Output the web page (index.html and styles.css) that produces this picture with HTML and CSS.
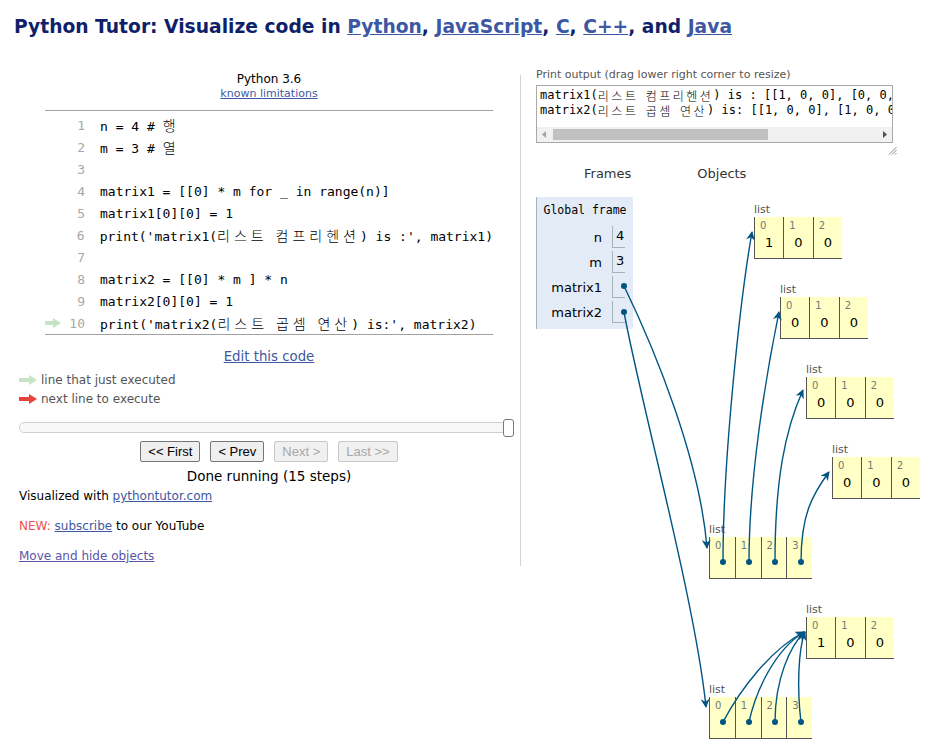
FILE: index.html
```html
<!DOCTYPE html>
<html>
<head>
<meta charset="utf-8">
<link rel="stylesheet" href="styles.css">
</head>
<body>
<h1 class="title">Python Tutor: Visualize code in <a href="#">Python</a>, <a href="#">JavaScript</a>, <a href="#">C</a>, <a href="#">C++</a>, and <a href="#">Java</a></h1>
<div class="main">
  <div class="left">
    <div class="center-block">
      <div class="lang">Python 3.6</div>
      <div class="limits"><a href="#">known limitations</a></div>
      <div class="code">
        <div class="line"><span class="arrow-cell"></span><span class="num">1</span><span class="src">n = 4 # <span class="ko">행</span></span></div>
        <div class="line"><span class="arrow-cell"></span><span class="num">2</span><span class="src">m = 3 # <span class="ko">열</span></span></div>
        <div class="line"><span class="arrow-cell"></span><span class="num">3</span><span class="src"></span></div>
        <div class="line"><span class="arrow-cell"></span><span class="num">4</span><span class="src">matrix1 = [[0] * m for _ in range(n)]</span></div>
        <div class="line"><span class="arrow-cell"></span><span class="num">5</span><span class="src">matrix1[0][0] = 1</span></div>
        <div class="line"><span class="arrow-cell"></span><span class="num">6</span><span class="src">print('matrix1(<span class="ko">리스트</span> <span class="ko">컴프리헨션</span>) is :', matrix1)</span></div>
        <div class="line"><span class="arrow-cell"></span><span class="num">7</span><span class="src"></span></div>
        <div class="line"><span class="arrow-cell"></span><span class="num">8</span><span class="src">matrix2 = [[0] * m ] * n</span></div>
        <div class="line"><span class="arrow-cell"></span><span class="num">9</span><span class="src">matrix2[0][0] = 1</span></div>
        <div class="line"><span class="arrow-cell"><svg class="code-arrow" width="16" height="10" viewBox="0 0 16 10"><rect x="0" y="3" width="9" height="4" fill="#c5e3c5"/><polygon points="8,0 16,5 8,10" fill="#c5e3c5"/></svg></span><span class="num">10</span><span class="src">print('matrix2(<span class="ko">리스트</span> <span class="ko">곱셈</span> <span class="ko">연산</span>) is:', matrix2)</span></div>
      </div>
      <div class="edit"><a href="#">Edit this code</a></div>
    </div>
    <div class="legend">
      <div class="legend-row"><svg width="18" height="10" viewBox="0 0 18 10"><rect x="0" y="3" width="11" height="4" fill="#c5e3c5"/><polygon points="10,0 18,5 10,10" fill="#c5e3c5"/></svg><span>line that just executed</span></div>
      <div class="legend-row"><svg width="18" height="10" viewBox="0 0 18 10"><rect x="0" y="3" width="11" height="4" fill="#e8433a"/><polygon points="10,0 18,5 10,10" fill="#e8433a"/></svg><span>next line to execute</span></div>
    </div>
    <div class="slider"><div class="track"></div><div class="thumb"></div></div>
    <div class="center-block">
      <div class="buttons">
        <button class="btn">&lt;&lt; First</button>
        <button class="btn">&lt; Prev</button>
        <button class="btn disabled">Next &gt;</button>
        <button class="btn disabled">Last &gt;&gt;</button>
      </div>
      <div class="done">Done running (15 steps)</div>
    </div>
    <div class="info">Visualized with <a href="#">pythontutor.com</a></div>
    <div class="info news"><span class="new">NEW:</span> <a href="#">subscribe</a> to our YouTube</div>
    <div class="info move"><a href="#" class="visited">Move and hide objects</a></div>
  </div>
  <div class="sep"></div>
  <div class="right">
    <div class="out-label">Print output (drag lower right corner to resize)</div>
    <div class="output">
      <div class="out-text"><div class="out-line">matrix1(<span class="ko-out">리스트</span> <span class="ko-out">컴프리헨션</span>) is : [[1, 0, 0], [0, 0, 0], [0, 0, 0], [0, 0, 0]]</div><div class="out-line">matrix2(<span class="ko-out">리스트</span> <span class="ko-out">곱셈</span> <span class="ko-out">연산</span>) is: [[1, 0, 0], [1, 0, 0], [1, 0, 0], [1, 0, 0]]</div></div>
      <div class="hscroll">
        <span class="sb-arrow"><svg width="15" height="15" viewBox="0 0 15 15"><polygon points="9,4 5,7.5 9,11" fill="#a3a3a3"/></svg></span>
        <span class="sb-track"><span class="sb-thumb"></span></span>
        <span class="sb-arrow"><svg width="15" height="15" viewBox="0 0 15 15"><polygon points="6,4 10,7.5 6,11" fill="#505050"/></svg></span>
      </div>
    </div>
    <div class="grip-row"><svg width="9" height="9" viewBox="0 0 9 9"><line x1="8.5" y1="1" x2="1" y2="8.5" stroke="#888" stroke-width="1"/><line x1="8.5" y1="4" x2="4" y2="8.5" stroke="#888" stroke-width="1"/><line x1="8.5" y1="7" x2="7" y2="8.5" stroke="#888" stroke-width="1"/></svg></div>
    <div class="viz-head"><span class="h-frames">Frames</span><span class="h-objects">Objects</span></div>
    <div class="frame">
      <div class="frame-title">Global frame</div>
      <div class="var"><span class="vname">n</span><span class="vval">4</span></div>
      <div class="var"><span class="vname">m</span><span class="vval">3</span></div>
      <div class="var"><span class="vname">matrix1</span><span class="vval"></span></div>
      <div class="var"><span class="vname">matrix2</span><span class="vval"></span></div>
    </div>

    <div class="obj obj-a"><div class="tlabel">list</div><div class="list l3"><div class="cell"><span class="idx">0</span><span class="val">1</span></div><div class="cell"><span class="idx">1</span><span class="val">0</span></div><div class="cell"><span class="idx">2</span><span class="val">0</span></div></div></div>
    <div class="obj obj-b"><div class="tlabel">list</div><div class="list l3"><div class="cell"><span class="idx">0</span><span class="val">0</span></div><div class="cell"><span class="idx">1</span><span class="val">0</span></div><div class="cell"><span class="idx">2</span><span class="val">0</span></div></div></div>
    <div class="obj obj-c"><div class="tlabel">list</div><div class="list l3"><div class="cell"><span class="idx">0</span><span class="val">0</span></div><div class="cell"><span class="idx">1</span><span class="val">0</span></div><div class="cell"><span class="idx">2</span><span class="val">0</span></div></div></div>
    <div class="obj obj-d"><div class="tlabel">list</div><div class="list l3"><div class="cell"><span class="idx">0</span><span class="val">0</span></div><div class="cell"><span class="idx">1</span><span class="val">0</span></div><div class="cell"><span class="idx">2</span><span class="val">0</span></div></div></div>
    <div class="obj obj-m1"><div class="tlabel">list</div><div class="list l4"><div class="cell"><span class="idx">0</span></div><div class="cell"><span class="idx">1</span></div><div class="cell"><span class="idx">2</span></div><div class="cell"><span class="idx">3</span></div></div></div>
    <div class="obj obj-m2i"><div class="tlabel">list</div><div class="list l3"><div class="cell"><span class="idx">0</span><span class="val">1</span></div><div class="cell"><span class="idx">1</span><span class="val">0</span></div><div class="cell"><span class="idx">2</span><span class="val">0</span></div></div></div>
    <div class="obj obj-m2"><div class="tlabel">list</div><div class="list l4"><div class="cell"><span class="idx">0</span></div><div class="cell"><span class="idx">1</span></div><div class="cell"><span class="idx">2</span></div><div class="cell"><span class="idx">3</span></div></div></div>

    <svg class="arrows" width="420" height="685" viewBox="521 65 420 685">
      <defs>
        <marker id="ah" viewBox="0 0 10 10" refX="9" refY="5" markerWidth="10" markerHeight="9" markerUnits="userSpaceOnUse" orient="auto">
          <path d="M0,0 L10,5 L0,10 L3,5 z" fill="#005583"/>
        </marker>
      </defs>
      <g fill="none" stroke="#005583" stroke-width="1.4" marker-end="url(#ah)">
        <path d="M624,286 C655,350 700,460 707,548"/>
        <path d="M624,312 C640,400 695,600 706,707"/>
        <path d="M723,562 C723,460 740,300 752,232"/>
        <path d="M749,562 C749,480 765,380 779,312"/>
        <path d="M775,562 C775,480 785,430 803,390"/>
        <path d="M801,562 C801,515 812,495 829,472"/>
        <path d="M723,722 C740,690 770,650 804,632"/>
        <path d="M749,722 C756,690 775,650 804,632"/>
        <path d="M775,722 C775,680 790,645 805,632"/>
        <path d="M801,722 C797,690 798,650 805,632"/>
      </g>
      <g fill="#005583">
        <circle cx="624" cy="286" r="3"/>
        <circle cx="624" cy="312" r="3"/>
        <circle cx="723" cy="562" r="3"/>
        <circle cx="749" cy="562" r="3"/>
        <circle cx="775" cy="562" r="3"/>
        <circle cx="801" cy="562" r="3"/>
        <circle cx="723" cy="722" r="3"/>
        <circle cx="749" cy="722" r="3"/>
        <circle cx="775" cy="722" r="3"/>
        <circle cx="801" cy="722" r="3"/>
      </g>
    </svg>
  </div>
</div>
</body>
</html>
```
FILE: styles.css
```css
html, body {
  margin: 0;
  padding: 0;
  background: #fff;
}
body {
  font-family: "DejaVu Sans", Verdana, sans-serif;
  font-size: 13px;
  color: #000;
  width: 941px;
  height: 750px;
  overflow: hidden;
}
a {
  color: #3d58a2;
  text-decoration: underline;
}
a.visited {
  color: #5a55a8;
}
.title {
  margin: 0;
  padding: 16px 0 0 14px;
  font-size: 18.7px;
  line-height: 22px;
  font-weight: bold;
  color: #101f6b;
  white-space: nowrap;
}
.main {
  display: flex;
  margin-top: 27px;
}
.left {
  margin-left: 19px;
  width: 495px;
  padding-right: 6px;
}
.sep {
  width: 1px;
  background: #d3d3d3;
  margin-top: 10px;
}
.center-block {
  margin: 0 21px 0 26px;
  text-align: center;
}
.lang {
  padding-top: 7px;
  font-size: 12px;
  line-height: 14px;
}
.limits {
  font-size: 11px;
  line-height: 15px;
}
.code {
  margin-top: 9px;
  border-top: 1px solid #a0a0a0;
  border-bottom: 1px solid #a0a0a0;
  padding-top: 3px;
  text-align: left;
  font-family: "DejaVu Sans Mono", "Noto Sans CJK KR", monospace;
  font-size: 13px;
}
.line {
  display: flex;
  align-items: center;
  height: 22px;
  white-space: pre;
}
.ko {
  font-family: "Noto Sans CJK KR", sans-serif;
  font-size: 14px;
  font-weight: 300;
  letter-spacing: 4px;
  line-height: 16px;
}
.arrow-cell {
  width: 20px;
  display: flex;
  align-items: center;
}
.code-arrow {
  display: block;
}
.num {
  width: 20px;
  text-align: right;
  color: #a8a8a8;
}
.src {
  margin-left: 15px;
}
.edit {
  margin-top: 14px;
  line-height: 16px;
  font-size: 13.3px;
}
.legend {
  margin-top: 5px;
  color: #555;
  font-size: 12px;
}
.legend-row {
  display: flex;
  align-items: center;
  height: 19px;
}
.legend-row svg {
  margin-right: 4px;
}
.slider {
  position: relative;
  margin-top: 11px;
  height: 18px;
}
.track {
  position: absolute;
  left: 0;
  right: 5px;
  top: 3px;
  height: 11px;
  border: 1px solid #d0d0d0;
  border-radius: 5px;
  background: #f8f8f8;
  box-sizing: border-box;
}
.thumb {
  position: absolute;
  right: 0;
  top: 0;
  width: 11px;
  height: 18px;
  border: 1px solid #7a7a7a;
  border-radius: 3px;
  background: #fff;
  box-sizing: border-box;
}
.buttons {
  display: flex;
  justify-content: center;
  gap: 10px;
  margin-top: 4px;
}
.btn {
  font-family: "Liberation Sans", Arial, sans-serif;
  font-size: 13px;
  height: 21px;
  padding: 0 7px;
  border: 1px solid #767676;
  border-radius: 2px;
  background: #efefef;
  color: #000;
}
.btn.disabled {
  border-color: #c8c8c8;
  color: #a8a8a8;
  background: #f0f0f0;
}
.done {
  margin-top: 5px;
  line-height: 18px;
  font-size: 13.5px;
}
.info {
  line-height: 18px;
  margin-top: 2px;
  font-size: 12px;
}
.news {
  margin-top: 12px;
}
.move {
  margin-top: 12px;
  padding-bottom: 1px;
}
.new {
  color: #f0534a;
}
.right {
  position: relative;
  padding-left: 15px;
  flex: 1;
}
.out-label {
  padding-top: 3px;
  font-size: 11px;
  line-height: 14px;
  color: #555;
}
.output {
  margin-top: 3px;
  width: 357px;
  height: 58px;
  border: 1px solid #a9a9a9;
  box-sizing: border-box;
  overflow: hidden;
  display: flex;
  flex-direction: column;
}
.out-text {
  flex: 1;
  padding: 2px 3px 0;
  overflow: hidden;
  font-family: "DejaVu Sans Mono", "Noto Sans CJK KR", monospace;
  font-size: 12px;
}
.out-line {
  height: 15px;
  line-height: 15px;
  white-space: pre;
}
.ko-out {
  display: inline-block;
  vertical-align: top;
  height: 15px;
  overflow: visible;
  font-family: "Noto Sans CJK KR", sans-serif;
  font-weight: 300;
  letter-spacing: 2.5px;
  line-height: 15px;
}
.hscroll {
  display: flex;
  height: 15px;
  background: #f1f1f1;
}
.sb-arrow {
  width: 15px;
  height: 15px;
}
.sb-arrow svg {
  display: block;
}
.sb-track {
  flex: 1;
  position: relative;
}
.sb-thumb {
  position: absolute;
  left: 1px;
  top: 2px;
  width: 215px;
  height: 11px;
  background: #c1c1c1;
}
.grip-row {
  width: 361px;
  display: flex;
  justify-content: flex-end;
  margin-top: 3px;
  height: 9px;
}
.grip-row svg {
  display: block;
}
.viz-head {
  margin-top: 11px;
  line-height: 16px;
  color: #333;
}
.h-frames {
  margin-left: 48px;
}
.h-objects {
  margin-left: 66px;
}
.frame {
  margin-top: 15px;
  width: 97px;
  box-sizing: border-box;
  background: #e2ebf6;
  border-left: 1px solid #a6b3b6;
  padding: 6px 8px 6px 0;
}
.frame-title {
  font-family: "DejaVu Sans Mono", monospace;
  font-size: 11.5px;
  line-height: 14px;
  text-align: center;
  margin-right: -8px;
  margin-bottom: 9px;
}
.var {
  display: flex;
  height: 22px;
  margin-bottom: 3px;
}
.var:last-child {
  margin-bottom: 0;
}
.vname {
  flex: 1;
  text-align: right;
  padding-right: 10px;
  line-height: 24px;
}
.vval {
  width: 13px;
  box-sizing: border-box;
  border-left: 1px solid #a6b3b6;
  border-bottom: 1px solid #a6b3b6;
  padding-left: 3px;
  line-height: 20px;
}
.obj {
  position: absolute;
}
.obj-a { left: 233px; top: 138px; }
.obj-b { left: 259px; top: 218px; }
.obj-c { left: 285px; top: 298px; }
.obj-d { left: 311px; top: 378px; }
.obj-m1 { left: 188px; top: 458px; }
.obj-m2i { left: 285px; top: 538px; }
.obj-m2 { left: 188px; top: 618px; }
.tlabel {
  font-size: 11px;
  line-height: 14px;
  color: #555;
}
.list {
  display: flex;
}
.cell {
  height: 42px;
  box-sizing: border-box;
  border-left: 1px solid #555;
  border-bottom: 1px solid #555;
  background: #ffffc6;
  display: flex;
  flex-direction: column;
}
.l3 .cell { width: 29.33px; }
.l4 .cell { width: 25.75px; }
.idx {
  font-size: 10px;
  line-height: 12px;
  color: #777;
  padding: 3px 0 0 5px;
}
.val {
  text-align: center;
  font-size: 13px;
  line-height: 16px;
  margin-top: 3px;
}
.arrows {
  position: absolute;
  left: 0;
  top: 0;
  overflow: visible;
  pointer-events: none;
}
```
